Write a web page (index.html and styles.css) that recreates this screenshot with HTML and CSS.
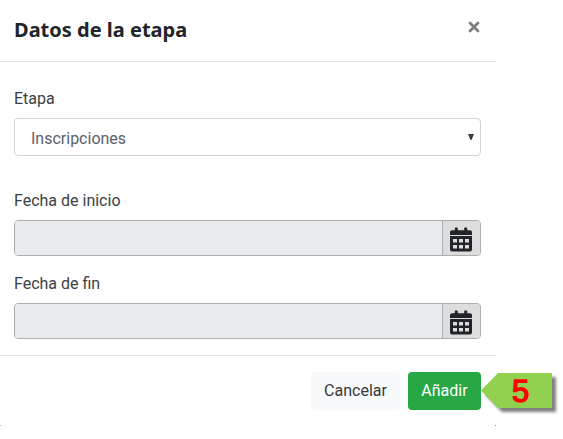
FILE: index.html
```html
<!DOCTYPE html>
<html lang="es">
<head>
<meta charset="utf-8">
<title>Datos de la etapa</title>
<link rel="stylesheet" href="styles.css">
</head>
<body>
<svg class="defs" width="0" height="0" aria-hidden="true">
  <symbol id="calendar" viewBox="0 0 22 25">
    <path fill="#212529" fill-rule="evenodd" d="M0 9h22V22.500a2 2 0 0 1-2 2H2a2 2 0 0 1-2-2zM3 12v3.500h4V12zm6 0v3.500h4V12zm6 0v3.500h4V12zM3 18v3.500h4V18zm6 0v3.500h4V18zm6 0v3.500h4V18zM0 8V5.200a2 2 0 0 1 2-2h2.800V1.200a.7.7 0 0 1 .7-.7h1.600a.7.7 0 0 1 .7.7v2h6.400v-2a.7.7 0 0 1 .7-.7h1.600a.7.7 0 0 1 .7.7v2H20a2 2 0 0 1 2 2V8z"/>
  </symbol>
</svg>
<section class="modal">
  <header class="modal-header">
    <h1 class="title">Datos de la etapa</h1>
    <svg class="close" viewBox="0 0 12 12"><path d="M2 2l8 8M10 2l-8 8"/></svg>
  </header>
  <div class="modal-body">
    <div class="label">Etapa</div>
    <div class="select">
      <span>Inscripciones</span>
      <svg class="caret" viewBox="0 0 6 6"><path d="M0 0h6L3.500 6h-1z"/></svg>
    </div>
    <div class="label">Fecha de inicio</div>
    <div class="date date-start">
      <div class="field"></div>
      <div class="addon"><svg class="calendar"><use href="#calendar"/></svg></div>
    </div>
    <div class="label">Fecha de fin</div>
    <div class="date">
      <div class="field"></div>
      <div class="addon"><svg class="calendar"><use href="#calendar"/></svg></div>
    </div>
  </div>
  <footer class="modal-footer">
    <div class="btn btn-light">Cancelar</div>
    <div class="btn btn-success">Añadir</div>
    <div class="callout">
      <svg class="callout-shape" viewBox="0 0 71 35"><path d="M0 17.500L17 0h54v35H17z"/></svg>
      <span class="callout-number">5</span>
    </div>
  </footer>
</section>
</body>
</html>
```

FILE: styles.css
```css
* { box-sizing: border-box; }

body {
  margin: 0;
  background: #fff;
  color: #3c4044;
  font: 16px/24px Roboto, sans-serif;
}

.defs { display: block; }

.modal {
  width: 496px;
  height: 426px;
}

.modal-header {
  display: flex;
  justify-content: space-between;
  height: 62px;
  padding: 15px 15px 0 14px;
  border-bottom: 1px solid #e1e4e7;
}

.title {
  margin: 0;
  color: #212529;
  font: bold 20px/30px "Noto Sans", sans-serif;
}

.close {
  width: 12px;
  height: 12px;
  margin: 6px 1px 0 0;
  fill: none;
  stroke: #7f7f7f;
  stroke-width: 2.800;
  stroke-linecap: round;
}

.modal-body {
  height: 293px;
  padding: 25px 15px 0 14px;
}

.label { margin-bottom: 7px; }

.select {
  display: flex;
  align-items: center;
  justify-content: space-between;
  height: 38px;
  margin-bottom: 33px;
  padding: 3px 6px 0 16px;
  border: 1px solid #ced4da;
  border-radius: 4px;
  color: #5a626a;
}

.caret {
  width: 6px;
  height: 6px;
  margin-bottom: 3px;
  fill: #343a40;
}

.date {
  display: flex;
  height: 36px;
  border: 1px solid #adadad;
  border-radius: 4px;
  overflow: hidden;
}

.date-start { margin-bottom: 16px; }

.field {
  flex: 1;
  background: #e9ecef;
}

.addon {
  width: 38px;
  padding: 6px 0 0 7px;
  border-left: 1px solid #adadad;
  background: #ddd;
}

.calendar {
  display: block;
  width: 22px;
  height: 25px;
}

.modal-footer {
  position: relative;
  display: flex;
  justify-content: flex-end;
  gap: 8px;
  height: 71px;
  padding: 16px 15px 0 0;
  border-top: 1px solid #e1e4e7;
  /* traces of the rounded bottom corners */
  background:
    linear-gradient(#bbb, #bbb) left bottom / 1px 1px no-repeat,
    linear-gradient(#999, #999) right bottom / 1px 1px no-repeat;
}

.btn {
  height: 38px;
  border-radius: 4px;
  line-height: 38px;
  text-align: center;
}

.btn-light {
  width: 89px;
  background: #f8f9fa;
  color: #343a40;
}

.btn-success {
  width: 73px;
  background: #28a745;
  color: #fff;
}

.callout {
  position: absolute;
  top: 17px;
  left: 481px;
  width: 71px;
  height: 35px;
}

.callout-shape {
  display: block;
  width: 71px;
  height: 35px;
  overflow: visible;
  fill: #92d050;
  filter: drop-shadow(4px 4px 1.500px rgba(0, 0, 0, 0.5));
}

.callout-number {
  position: absolute;
  top: 0;
  left: 31px;
  color: #f00;
  font: 31px/37px "Liberation Sans", sans-serif;
  -webkit-text-stroke: 1.400px #f00;
}
```
